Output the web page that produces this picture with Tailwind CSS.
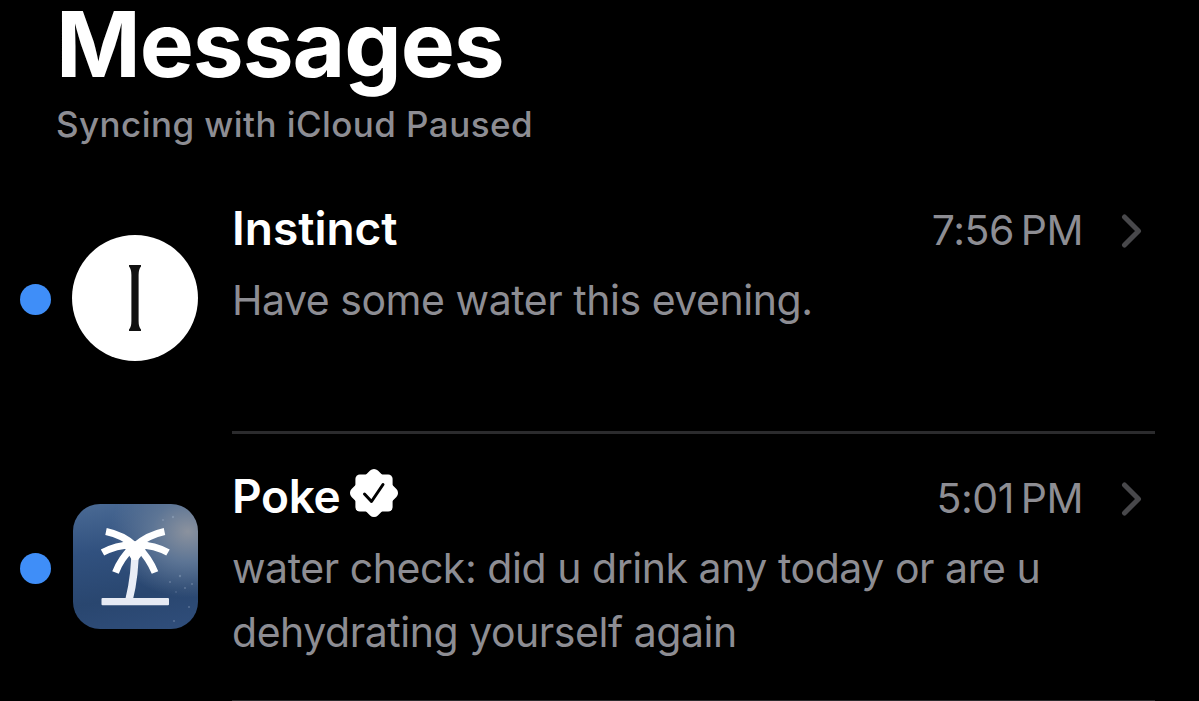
<!DOCTYPE html>
<html lang="en">
<head>
  <meta charset="UTF-8" />
  <meta name="viewport" content="width=device-width, initial-scale=1.0" />
  <title>Messages</title>
  <script src="https://cdn.jsdelivr.net/npm/@tailwindcss/browser@4"></script>
</head>
<body class="bg-black h-screen overflow-hidden font-['Inter',sans-serif] text-[#8d8d93]">
  <header class="h-[164px] pl-[56px]">
    <h1 class="h-[88px] text-[91px] leading-[88px] font-bold tracking-[-1.1px] text-white whitespace-nowrap">Messages</h1>
    <p class="mt-[13px] text-[35px] leading-[46px] font-medium tracking-[0.43px] whitespace-nowrap">Syncing with iCloud Paused</p>
  </header>

  <main>
    <!-- Instinct -->
    <article class="flex h-[270px]">
      <div class="flex h-[268px] w-[232px] items-center pl-[20px]">
        <span class="mt-[3px] size-[31px] rounded-full bg-[#3f8ef8]"></span>
        <div class="ml-[21px] flex size-[126px] items-center justify-center rounded-full bg-white">
          <svg class="h-[66px] w-[12px]" viewBox="0 0 12 66" fill="#111">
            <path d="M0 0H12V1.500Q9.600 4 9.600 10V56Q9.600 62 12 64.500V66H0V64.500Q2.400 62 2.400 56V10Q2.400 4 0 1.500Z" />
          </svg>
        </div>
      </div>
      <div class="w-[923px] border-b-[3px] border-[#2b2b2d] pt-[35px]">
        <div class="flex h-[58px] items-center">
          <h2 class="text-[46px] leading-[58px] font-semibold text-white">Instinct</h2>
          <time class="ml-auto pt-[4px] text-[41px] leading-[54px] tracking-[-0.5px] whitespace-nowrap">7:56&#8239;PM</time>
          <svg class="mt-[6px] mr-[13px] ml-[38px] h-[34px] w-[21px]" viewBox="0 0 21 34" fill="none" stroke="#48484b" stroke-width="5" stroke-linecap="round" stroke-linejoin="round">
            <path d="M3.500 3L17.500 17L3.500 31" />
          </svg>
        </div>
        <p class="mt-[11px] text-[41px] leading-[64px] tracking-[-0.46px] whitespace-nowrap">Have some water this evening.</p>
      </div>
    </article>

    <!-- Poke -->
    <article class="flex h-[268px]">
      <div class="flex h-[265px] w-[232px] items-center pl-[20px]">
        <span class="mt-[4px] size-[31px] rounded-full bg-[#3f8ef8]"></span>
        <div class="ml-[22px] size-[125px] overflow-hidden rounded-[27px] bg-[radial-gradient(ellipse_at_92%_22%,#8b929e_0%,#5d7595_22%,transparent_48%),linear-gradient(170deg,#4b6b95_0%,#31517f_35%,#29466f_70%,#304e7b_100%)]">
          <svg class="size-[125px]" viewBox="0 0 125 125" fill="none" stroke="#fff" stroke-width="7">
            <g fill="#a9bbd2" fill-opacity=".35" stroke="none">
              <circle cx="97" cy="78" r="1" /><circle cx="107" cy="72" r="1.200" /><circle cx="112" cy="84" r="1" />
              <circle cx="119" cy="80" r="1" /><circle cx="103" cy="88" r=".8" /><circle cx="116" cy="103" r="1" />
              <circle cx="101" cy="117" r="1" /><circle cx="90" cy="16" r="1" /><circle cx="100" cy="13" r="1.200" />
            </g>
            <path d="M33 27.500Q50 31 62 42Q75 31 91.500 27.500" />
            <path d="M29.500 48.500Q45 40 62 41Q80 40 95 48.500" />
            <path d="M42.500 68.500Q48 54 60 43M82 68.500Q76 54 65 43" />
            <path stroke="#e9edf6" stroke-width="7.500" d="M62 42Q62.500 70 56 96" />
            <path fill="#fff" stroke="none" d="M49 39Q56 35 62 38Q69 35 76 39Q70 50 65 56H59Q55 50 49 39Z" />
            <rect x="28.500" y="94" width="67.500" height="7.200" rx="1" fill="#e6eaf3" stroke="none" />
          </svg>
        </div>
      </div>
      <div class="w-[923px] border-b-[2px] border-[#2b2b2d] pt-[33px]">
        <div class="flex h-[58px] items-center">
          <h2 class="text-[46px] leading-[58px] font-semibold tracking-[-0.3px] text-white">Poke</h2>
          <svg class="-mt-[6px] ml-[8px] size-[50px]" viewBox="-25 -25 50 50">
            <rect x="-18.600" y="-18.600" width="37.200" height="37.200" rx="4.500" fill="#fff" />
            <rect x="-18.600" y="-18.600" width="37.200" height="37.200" rx="5.500" fill="#fff" transform="rotate(45)" />
            <path d="M-9.500 1L-2.500 8.500L9 -8.500" fill="none" stroke="#000" stroke-width="3" stroke-linecap="round" stroke-linejoin="round" />
          </svg>
          <time class="ml-auto pt-[4px] text-[41px] leading-[54px] tracking-[-0.5px] whitespace-nowrap">5:01&#8239;PM</time>
          <svg class="mt-[6px] mr-[13px] ml-[38px] h-[34px] w-[21px]" viewBox="0 0 21 34" fill="none" stroke="#48484b" stroke-width="5" stroke-linecap="round" stroke-linejoin="round">
            <path d="M3.500 3L17.500 17L3.500 31" />
          </svg>
        </div>
        <p class="mt-[11px] text-[41px] leading-[64px] tracking-[-0.46px] whitespace-nowrap">water check: did u drink any today or are u<br />dehydrating yourself again</p>
      </div>
    </article>
  </main>
</body>
</html>
